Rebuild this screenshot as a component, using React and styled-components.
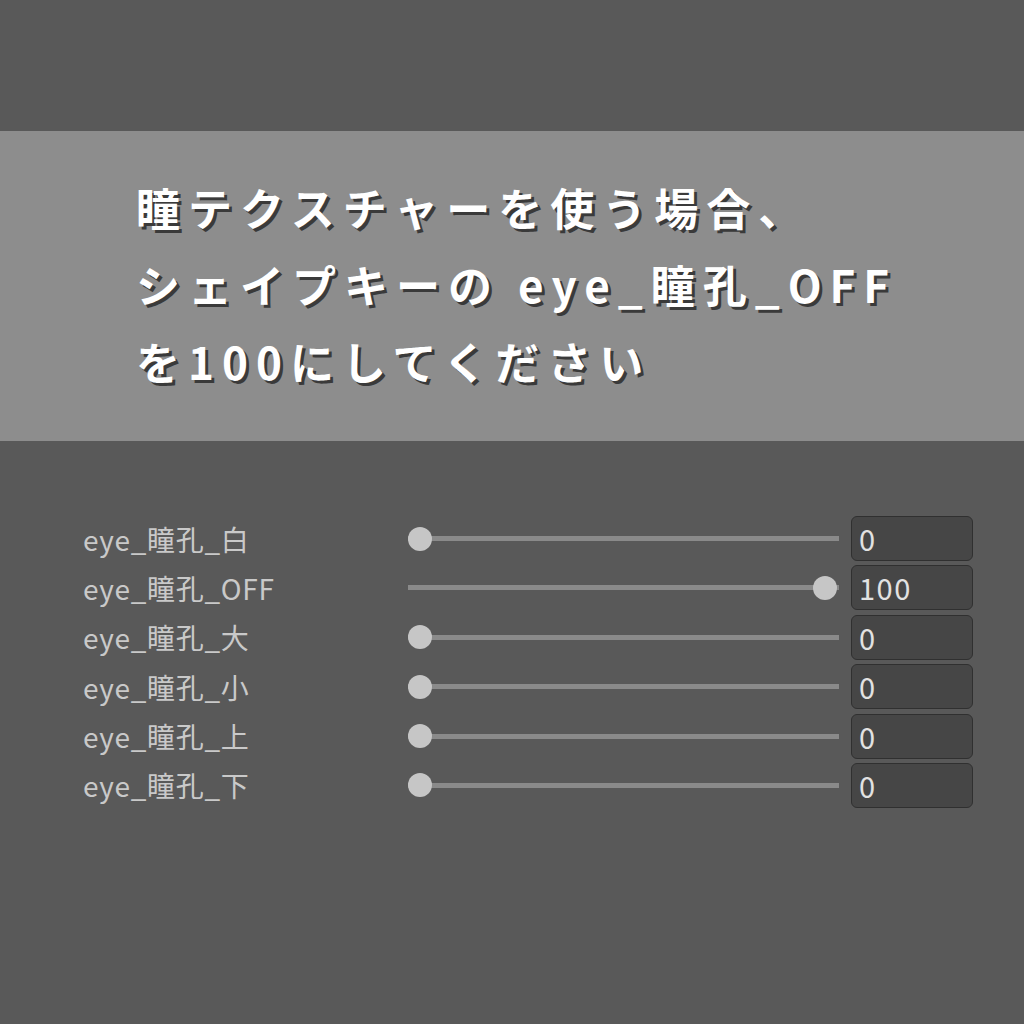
import React from 'react';
import styled, { createGlobalStyle } from 'styled-components';

const shapeKeys = [
  { name: 'eye_瞳孔_白', value: 0 },
  { name: 'eye_瞳孔_OFF', value: 100 },
  { name: 'eye_瞳孔_大', value: 0 },
  { name: 'eye_瞳孔_小', value: 0 },
  { name: 'eye_瞳孔_上', value: 0 },
  { name: 'eye_瞳孔_下', value: 0 },
];

function App() {
  return (
    <>
      <GlobalStyle />
      <Page>
        <TopStrip />
        <Banner>
          <NoteLine>瞳テクスチャーを使う場合、</NoteLine>
          <NoteLine>シェイプキーの eye_瞳孔_OFF</NoteLine>
          <NoteLine>を100にしてください</NoteLine>
        </Banner>
        <KeyList>
          {shapeKeys.map((key) => (
            <KeyRow key={key.name}>
              <KeyLabel>{key.name}</KeyLabel>
              <Slider>
                <Track />
                <Thumb style={{ left: `calc((100% - 26px) * ${key.value / 100})` }} />
              </Slider>
              <ValueBox>{key.value}</ValueBox>
            </KeyRow>
          ))}
        </KeyList>
      </Page>
    </>
  );
}

const GlobalStyle = createGlobalStyle`
  html, body {
    margin: 0;
    padding: 0;
    background: #595959;
  }
`;

const Page = styled.div`
  width: 1024px;
  height: 1024px;
  background: #595959;
  font-family: "Noto Sans CJK JP", "Noto Sans", sans-serif;
  overflow: hidden;
`;

const TopStrip = styled.div`
  height: 131px;
`;

const Banner = styled.div`
  height: 310px;
  box-sizing: border-box;
  background: #8d8d8d;
  padding: 38px 0 0 136px;
  display: flex;
  flex-direction: column;
`;

const NoteLine = styled.div`
  color: #ffffff;
  font-size: 44px;
  font-weight: 700;
  letter-spacing: 8px;
  line-height: 77px;
  white-space: nowrap;
  text-shadow: 3px 3px 0 #3a3a3a;
`;

const KeyList = styled.div`
  margin-top: 75px;
  padding-left: 83px;
  display: flex;
  flex-direction: column;
  gap: 4.4px;
`;

const KeyRow = styled.div`
  display: grid;
  grid-template-columns: 313px 431px 122px;
  column-gap: 12px;
  align-items: center;
  height: 45px;
`;

const KeyLabel = styled.div`
  color: #c9c9c9;
  font-size: 28px;
  letter-spacing: 0.7px;
  white-space: nowrap;
`;

const Slider = styled.div`
  position: relative;
  height: 24px;
  display: flex;
  align-items: center;
`;

const Track = styled.div`
  width: 100%;
  height: 5px;
  background: #8a8a8a;
`;

const Thumb = styled.div`
  position: absolute;
  top: 0;
  width: 24px;
  height: 24px;
  border-radius: 50%;
  background: #c6c6c6;
`;

const ValueBox = styled.div`
  height: 45px;
  box-sizing: border-box;
  border: 1.5px solid #303030;
  border-radius: 6px;
  background: #464646;
  color: #e2e2e2;
  font-size: 29px;
  letter-spacing: 1.5px;
  line-height: 42px;
  padding-left: 7px;
`;

export default App;
